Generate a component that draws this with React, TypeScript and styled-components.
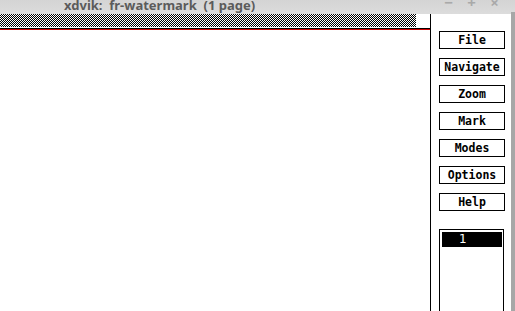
import React from 'react';
import styled, { createGlobalStyle } from 'styled-components';

const GlobalStyle = createGlobalStyle`
  html, body {
    margin: 0;
    padding: 0;
    background: #ffffff;
  }
  #root {
    width: 515px;
    height: 311px;
    overflow: hidden;
  }
`;

const Window = styled.div`
  width: 515px;
  height: 311px;
  display: flex;
  flex-direction: column;
  overflow: hidden;
  background: #ffffff;
`;

const TitleBar = styled.div`
  height: 14px;
  flex: none;
  display: flex;
  align-items: flex-end;
  background: linear-gradient(#d4d4d4, #dcdcdc);
  overflow: hidden;
  font-family: "Noto Sans", "DejaVu Sans", sans-serif;
`;

const Title = styled.div`
  padding-left: 64px;
  font-size: 13px;
  font-weight: bold;
  line-height: 13px;
  margin-bottom: 2px;
  color: #5b5b5b;
  white-space: pre;
  flex: 1;
`;

const Controls = styled.div`
  display: flex;
  gap: 14px;
  padding-right: 16px;
  margin-bottom: 6px;
`;

const Control = styled.span`
  width: 9px;
  text-align: center;
  font-size: 15px;
  font-weight: bold;
  line-height: 12px;
  color: #a9a9a9;
`;

const Main = styled.div`
  flex: 1;
  display: flex;
  min-height: 0;
`;

const Canvas = styled.div`
  width: 430px;
  flex: none;
  border-right: 1px solid #000;
  display: flex;
  flex-direction: column;
`;

const Stipple = styled.div`
  height: 13px;
  width: 416px;
  background-image: repeating-conic-gradient(#000 0 25%, #fff 0 50%);
  background-size: 2px 2px;
  image-rendering: pixelated;
`;

const Rule = styled.div<{ $color: string; $top?: number }>`
  height: 1px;
  margin-top: ${p => p.$top ?? 0}px;
  background: ${p => p.$color};
`;

const Page = styled.div`
  flex: 1;
  background: #fff;
`;

const Panel = styled.div`
  width: 80px;
  flex: none;
  display: flex;
  flex-direction: column;
  padding: 17px 0 0 8px;
  box-sizing: border-box;
  gap: 9px;
`;

const Button = styled.div`
  width: 66px;
  height: 18px;
  box-sizing: border-box;
  border: 1px solid #000;
  display: flex;
  align-items: center;
  justify-content: center;
  font-family: "DejaVu Sans Mono", "Liberation Mono", monospace;
  font-weight: bold;
  font-size: 11.5px;
  color: #000;
  background: #fff;
`;

const PageList = styled.div`
  margin-top: 9px;
  margin-left: 0px;
  width: 65px;
  flex: 1;
  box-sizing: border-box;
  border: 1px solid #000;
  border-bottom: none;
  padding: 2px 1px 0 2px;
`;

const PageItem = styled.div<{ $selected?: boolean }>`
  height: 15px;
  background: ${p => (p.$selected ? '#000' : '#fff')};
  color: ${p => (p.$selected ? '#fff' : '#000')};
  font-family: "DejaVu Sans", sans-serif;
  font-size: 12px;
  line-height: 15px;
  padding-left: 17px;
`;

const ScrollEdge = styled.div`
  flex: 1;
  margin-top: -2px;
  background: #a7a7a7;
`;

const buttons = ['File', 'Navigate', 'Zoom', 'Mark', 'Modes', 'Options', 'Help'];

export default function App() {
  return (
    <>
      <GlobalStyle />
      <Window>
        <TitleBar>
          <Title>{'xdvik:  fr-watermark  (1 page)'}</Title>
          <Controls>
            <Control>−</Control>
            <Control>+</Control>
            <Control>×</Control>
          </Controls>
        </TitleBar>
        <Main>
          <Canvas>
            <Stipple />
            <Rule $color="#000" $top={1} />
            <Rule $color="#d00000" />
            <Page />
          </Canvas>
          <Panel>
            {buttons.map(b => (
              <Button key={b}>{b}</Button>
            ))}
            <PageList>
              <PageItem $selected>1</PageItem>
            </PageList>
          </Panel>
          <ScrollEdge />
        </Main>
      </Window>
    </>
  );
}
